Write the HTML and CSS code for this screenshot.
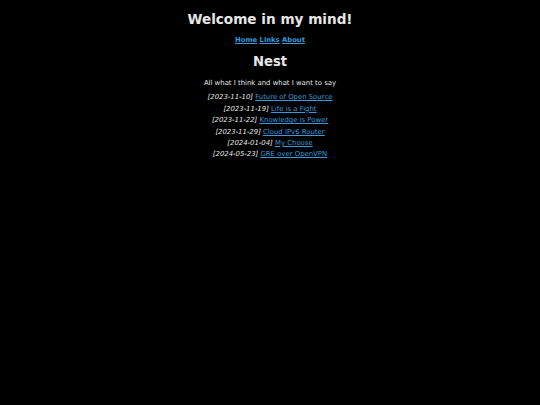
FILE: index.html
```html
<!DOCTYPE html>
<html>
<head>
<meta charset="utf-8">
<link rel="stylesheet" href="styles.css">
</head>
<body>
<header class="site-header">
  <h1 class="site-title">Welcome in my mind!</h1>
  <nav class="nav">
    <a href="#">Home</a>
    <a href="#">Links</a>
    <a href="#">About</a>
  </nav>
</header>
<main class="content">
  <h2 class="page-title">Nest</h2>
  <p class="intro">All what I think and what I want to say</p>
  <ul class="posts">
    <li><em>[2023-11-10]</em> <a href="#">Future of Open Source</a></li>
    <li><em>[2023-11-19]</em> <a href="#">Life is a Fight</a></li>
    <li><em>[2023-11-22]</em> <a href="#">Knowledge is Power</a></li>
    <li><em>[2023-11-29]</em> <a href="#">Cloud IPv6 Router</a></li>
    <li><em>[2024-01-04]</em> <a href="#">My Choose</a></li>
    <li><em>[2024-05-23]</em> <a href="#">GRE over OpenVPN</a></li>
  </ul>
</main>
</body>
</html>
```

FILE: styles.css
```css
html, body {
  margin: 0;
  padding: 0;
  background: #000;
  color: #e6e6e6;
  font-family: "DejaVu Sans", Verdana, sans-serif;
  font-size: 6.9px;
}
body {
  padding-top: 9.5px;
  text-align: center;
}
a {
  color: #3a9ad9;
}
.site-title {
  font-size: 13.6px;
  margin: 0;
  line-height: 18px;
}
.nav {
  margin-top: 7px;
  font-weight: bold;
  font-size: 6.8px;
  line-height: 10px;
}
.page-title {
  font-size: 13.2px;
  margin: 7.5px 0 0;
  line-height: 20px;
}
.intro {
  margin: 6px 0 0;
  line-height: 10px;
}
.posts {
  list-style: none;
  padding: 0;
  margin: 4.3px 0 0;
  line-height: 11.4px;
}
```
